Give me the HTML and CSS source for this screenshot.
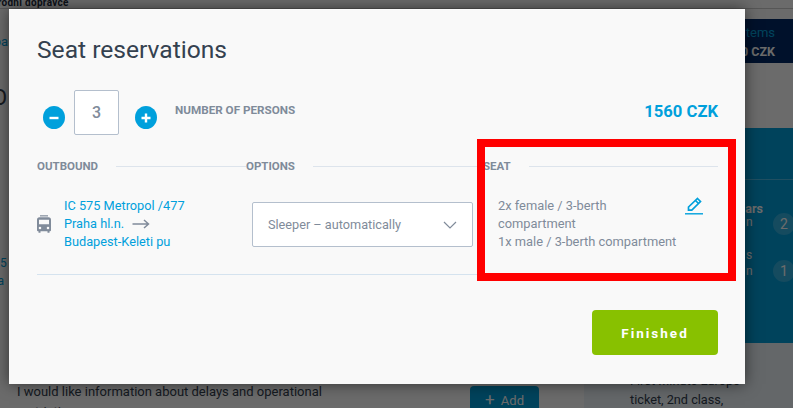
FILE: index.html
```html
<!DOCTYPE html>
<html lang="en">
<head>
    <meta charset="UTF-8">
    <title>Seat reservations</title>
    <link rel="stylesheet" href="styles.css">
</head>
<body>
    <div class="page">
        <div class="top-text">Mezinárodní dopravce</div>
        <div class="top-rule"></div>
        <div class="left-link">Zpa</div>
        <div class="left-heading">O</div>
        <div class="left-small">IC 5<br>Pra</div>
        <div class="info-text">I would like information about delays and operational restrictions</div>
        <div class="add-btn"><span class="add-plus">+</span> Add</div>
        <div class="side-bottom"></div>
        <div class="side-head">
            <div class="side-items">3 items</div>
            <div class="side-price">1560 CZK</div>
        </div>
        <div class="side-body">
            <div class="side-row side-row-a"><span class="side-label">ars</span><span class="side-sub">n</span><span class="side-num">2</span></div>
            <div class="side-row side-row-b"><span class="side-sub-top">s</span><span class="side-sub">n</span><span class="side-num">1</span></div>
        </div>
        <div class="side-text">First Minute Europe ticket, 2nd class,</div>
    </div>

    <div class="overlay"></div>

    <div class="modal">
        <h2 class="modal-title">Seat reservations</h2>

        <div class="persons">
            <div class="counter">
                <button class="round-btn">
                    <svg width="12" height="12" viewBox="0 0 12 12"><path d="M1.500 6h9" stroke="#fff" stroke-width="2.400"/></svg>
                </button>
                <div class="count-box">3</div>
                <button class="round-btn round-plus">
                    <svg width="12" height="12" viewBox="0 0 12 12"><path d="M1.500 6h9M6 1.500v9" stroke="#fff" stroke-width="2.400"/></svg>
                </button>
            </div>
            <div class="persons-label">NUMBER OF PERSONS</div>
            <div class="total">1560 CZK</div>
        </div>

        <div class="table-head">
            <div class="head-cell head-outbound"><span>OUTBOUND</span><i></i></div>
            <div class="head-cell head-options"><span>OPTIONS</span><i></i></div>
            <div class="head-cell head-seat"><span>SEAT</span><i></i></div>
        </div>

        <div class="table-row">
            <div class="train">
                <svg class="train-icon" width="14" height="18" viewBox="1 1 14 17.500">
                    <path d="M4 1h8v1.200H4z" fill="#808b9a"/>
                    <path fill-rule="evenodd" d="M3.500 3h9A2.500 2.500 0 0 1 15 5.500V16a1 1 0 0 1-1 1h-.5v1.500h-2V17h-7v1.500h-2V17H2a1 1 0 0 1-1-1V5.500A2.500 2.500 0 0 1 3.500 3zM3 5.500V10h10V5.500zM4 12.500a1.300 1.300 0 1 0 0 2.600 1.300 1.300 0 0 0 0-2.600zM12 12.500a1.300 1.300 0 1 0 0 2.600 1.300 1.300 0 0 0 0-2.600z" fill="#808b9a"/>
                </svg>
                <div class="train-text">
                    <div>IC 575 Metropol /477</div>
                    <div>Praha hl.n.
                        <svg class="arrow" width="18" height="10" viewBox="0 0 18 10"><path d="M0.500 5h16M12 1l4.500 4L12 9" fill="none" stroke="#808b9a" stroke-width="1.500"/></svg>
                    </div>
                    <div>Budapest-Keleti pu</div>
                </div>
            </div>
            <div class="select-col">
                <div class="select-box">
                    <span>Sleeper – automatically</span>
                    <svg width="14" height="8" viewBox="0 0 14 8"><path d="M1 1l6 6 6-6" fill="none" stroke="#808b9a" stroke-width="1.200"/></svg>
                </div>
            </div>
            <div class="seat-col">
                <div class="seat-text">
                    2x female / 3-berth compartment<br>
                    1x male / 3-berth compartment
                </div>
                <svg class="edit-icon" width="18" height="18" viewBox="0 0 18 18">
                    <path d="M12.500 1.500l3 3-8.700 8.700H3.500v-3.200z" fill="none" stroke="#00a0dc" stroke-width="1.700"/>
                    <path d="M10.500 3.500l3 3" stroke="#00a0dc" stroke-width="1.700"/>
                    <path d="M0 16.800h18" stroke="#00a0dc" stroke-width="1.400"/>
                </svg>
            </div>
        </div>

        <div class="modal-foot">
            <button class="finished-btn">Finished</button>
        </div>
    </div>

    <div class="highlight"></div>
</body>
</html>
```

FILE: styles.css
```css
html, body {
    margin: 0;
    padding: 0;
    height: 408px;
    overflow: hidden;
}
body {
    font-family: Roboto, Arial, sans-serif;
    background-color: #fff;
    position: relative;
}
.page {
    position: absolute;
    inset: 0;
    color: #33404f;
}
.top-text {
    position: absolute;
    left: -37px;
    top: -3px;
    font-size: 10px;
    font-weight: 700;
    letter-spacing: 0.3px;
    white-space: nowrap;
    color: #1d2a3a;
}
.top-rule {
    position: absolute;
    left: 0;
    right: 0;
    top: 8px;
    height: 1px;
    background-color: #ccc;
}
.left-link {
    position: absolute;
    left: -14px;
    top: 34px;
    font-size: 13px;
    color: #00a0dc;
}
.left-heading {
    position: absolute;
    left: -8px;
    top: 85px;
    font-size: 22px;
}
.left-small {
    position: absolute;
    left: -14px;
    top: 254px;
    font-size: 12px;
    line-height: 18px;
    color: #00a0dc;
}
.info-text {
    position: absolute;
    left: 17px;
    top: 382px;
    width: 320px;
    font-size: 13px;
    line-height: 20px;
}
.add-btn {
    position: absolute;
    left: 470px;
    top: 386px;
    width: 69px;
    height: 40px;
    line-height: 27px;
    text-align: center;
    font-size: 13px;
    color: #fff;
    background-color: #00a0dc;
    border-radius: 4px;
}
.add-plus {
    font-size: 17px;
    margin-right: 3px;
}
.side-bottom {
    position: absolute;
    left: 584px;
    right: 0;
    top: 340px;
    bottom: 0;
    background-color: #eef5fb;
}
.side-head {
    position: absolute;
    left: 585px;
    right: 0;
    top: 19px;
    height: 44px;
    background-color: #002a66;
    padding-right: 18px;
    text-align: right;
}
.side-items {
    font-size: 13px;
    line-height: 15px;
    margin-top: 6px;
    color: #00a0dc;
}
.side-price {
    font-size: 12.500px;
    line-height: 15px;
    font-weight: 700;
    color: #fff;
    margin-top: 4px;
}
.side-body {
    position: absolute;
    left: 585px;
    right: 0;
    top: 128px;
    height: 212px;
    background-color: #00a0dc;
}
/* saw edge along the bottom of the blue panel */
.side-body::after {
    content: "";
    position: absolute;
    left: 0;
    right: 0;
    top: 100%;
    height: 3px;
    background:
        linear-gradient(135deg, #00a0dc 50%, transparent 50%) 0 0 / 6px 6px repeat-x,
        linear-gradient(225deg, #00a0dc 50%, transparent 50%) 0 0 / 6px 6px repeat-x;
}
.side-row {
    position: absolute;
    left: 0;
    right: 0;
}
.side-row-a {
    top: 51px;
    height: 44px;
    border-top: 1px solid #4cbce6;
}
.side-row-b {
    top: 120px;
}
.side-label {
    position: absolute;
    right: 30px;
    top: 21px;
    font-size: 12.500px;
    font-weight: 700;
    color: #fff;
}
.side-sub, .side-sub-top {
    position: absolute;
    left: 161px;
    top: 35px;
    font-size: 12px;
    color: #fff;
}
.side-row-b .side-sub {
    top: 16px;
}
.side-sub-top {
    top: 0;
}
.side-num {
    position: absolute;
    left: 188px;
    top: 33px;
    width: 22px;
    height: 22px;
    line-height: 22px;
    border-radius: 50%;
    text-align: center;
    font-size: 14px;
    color: #fff;
    background-color: #33b3e3;
}
.side-row-b .side-num {
    top: 12px;
}
.side-text {
    position: absolute;
    left: 630px;
    top: 371px;
    width: 110px;
    font-size: 12.700px;
    line-height: 19px;
}
.overlay {
    position: absolute;
    inset: 0;
    background-color: rgba(0, 0, 0, 0.58);
}
.modal {
    position: absolute;
    left: 9px;
    top: 9px;
    width: 736px;
    height: 375px;
    box-sizing: border-box;
    padding: 0 27px 0 28px;
    background-color: #f9f9f9;
    box-shadow: 0 0 14px rgba(0, 0, 0, 0.55);
    color: #7f8b9a;
}
.modal-title {
    margin: 27px 0 0;
    font-size: 24.600px;
    font-weight: 400;
    line-height: 28px;
    color: #34414f;
}
.persons {
    display: flex;
    align-items: flex-start;
    margin-top: 26px;
}
.counter {
    display: flex;
    align-items: flex-start;
    margin-left: 6px;
}
.round-btn {
    width: 22px;
    height: 23px;
    margin: 16px 9px 0 0;
    padding: 0;
    border: none;
    border-radius: 50%;
    background-color: #00a0dc;
    display: flex;
    align-items: center;
    justify-content: center;
}
.round-plus {
    margin: 16px 0 0 16px;
}
.count-box {
    width: 45px;
    height: 45px;
    line-height: 43px;
    box-sizing: border-box;
    text-align: center;
    border: 1px solid #b4bfcd;
    border-radius: 2px;
    background-color: #fff;
    font-size: 16px;
    font-weight: 500;
}
.persons-label {
    margin: 13px 0 0 18px;
    font-size: 11.700px;
    font-weight: 700;
    line-height: 14px;
}
.total {
    margin: 12px 0 0 auto;
    font-size: 16.600px;
    font-weight: 700;
    line-height: 20px;
    color: #00a0dc;
}
.table-head {
    display: flex;
    margin-top: 24px;
    font-size: 11.500px;
    font-weight: 700;
    line-height: 14px;
}
.head-cell {
    display: flex;
    align-items: center;
}
.head-cell i {
    flex: 1;
    height: 1px;
    background-color: #dde4ec;
}
.head-outbound {
    width: 209px;
}
.head-outbound span,
.head-options span,
.head-seat span {
    margin-right: 18px;
}
.head-options {
    width: 237px;
}
.head-seat {
    flex: 1;
}
.table-row {
    display: flex;
    align-items: flex-start;
    height: 77px;
    margin-top: 24px;
    border-bottom: 1px solid #d5e3ef;
}
.train {
    display: flex;
    align-items: center;
    width: 215px;
    flex-shrink: 0;
}
.train-icon {
    margin-right: 13px;
}
.train-text {
    font-size: 12.750px;
    line-height: 18px;
    color: #00a0dc;
}
.arrow {
    margin-left: 5px;
    vertical-align: -1px;
}
.select-col {
    width: 221px;
    flex-shrink: 0;
    padding-top: 5px;
}
.select-box {
    display: flex;
    align-items: center;
    justify-content: space-between;
    box-sizing: border-box;
    height: 45px;
    padding: 0 15px;
    background-color: #fff;
    border: 1px solid #b4bfcd;
    border-radius: 2px;
    font-size: 12.700px;
}
.seat-col {
    flex: 1;
    display: flex;
    justify-content: space-between;
    align-items: flex-start;
    padding: 0 15px 0 25px;
}
.seat-text {
    width: 182px;
    font-size: 12.850px;
    line-height: 18px;
}
.modal-foot {
    display: flex;
    justify-content: flex-end;
    margin-top: 35px;
}
.finished-btn {
    width: 126px;
    height: 45px;
    border: none;
    border-radius: 4px;
    background-color: #88c100;
    color: #fff;
    font-family: Roboto, Arial, sans-serif;
    font-size: 13.500px;
    font-weight: 700;
    letter-spacing: 2px;
}
.highlight {
    position: absolute;
    left: 477px;
    top: 139px;
    width: 259px;
    height: 142px;
    box-sizing: border-box;
    border: 8px solid #ff0000;
}
```
